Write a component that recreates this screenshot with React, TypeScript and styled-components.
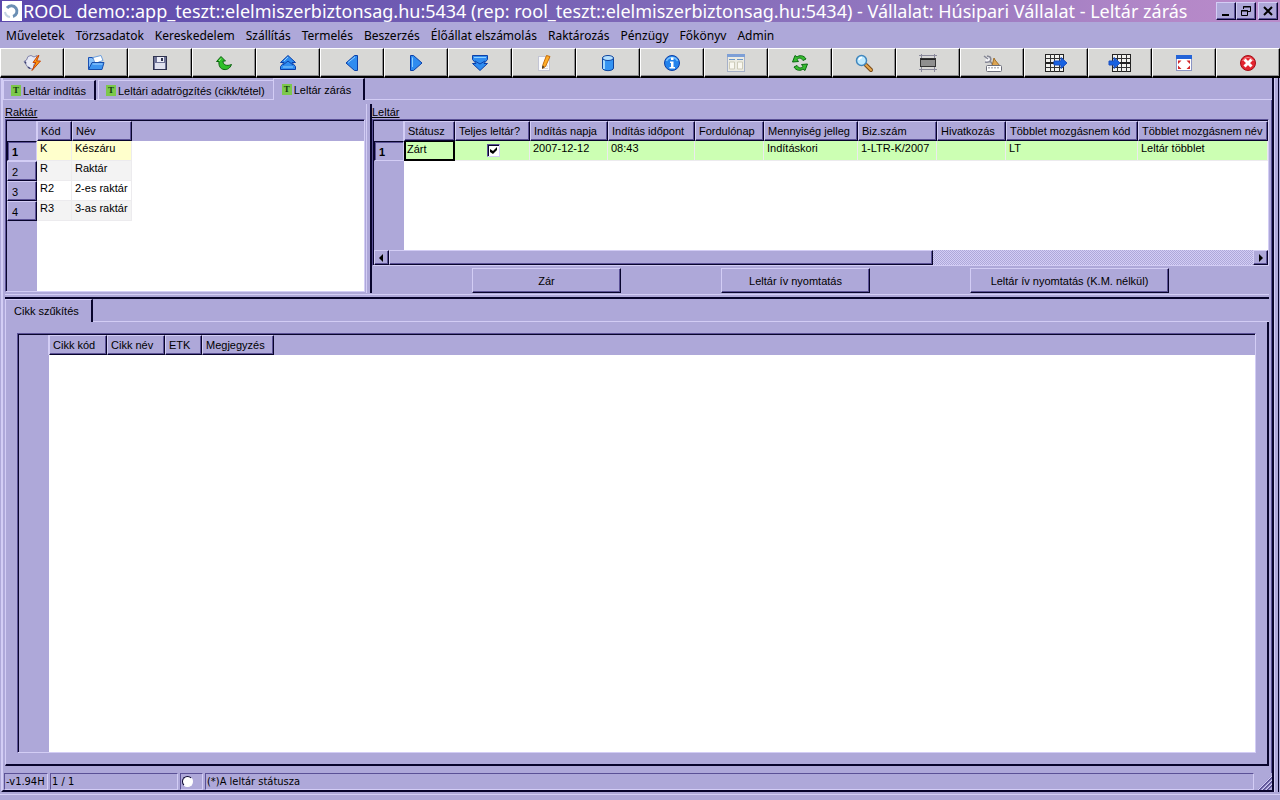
import React from "react";
import styled, { createGlobalStyle, css } from "styled-components";

const c = {
  base: "#aea8d9",
  light: "#d3cdf5",
  mid: "#5b5196",
  dark: "#08042c",
};
const ui = `"Liberation Sans", Arial, sans-serif`;
const wide = `"Noto Sans", sans-serif`;
const status = `"DejaVu Sans Condensed", "DejaVu Sans", sans-serif`;

const raised = css`
  border: 1px solid;
  border-color: ${c.light} ${c.dark} ${c.dark} ${c.light};
  box-shadow: inset -1px -1px 0 ${c.mid};
`;

const sunken = css`
  border: 1px solid;
  border-color: ${c.mid} ${c.light} ${c.light} ${c.mid};
  box-shadow: inset 1px 1px 0 ${c.dark};
  padding: 1px 0 0 1px;
`;

const Global = createGlobalStyle`
  *, *::before, *::after { box-sizing: border-box; }
  body { margin: 0; background: ${c.base}; color: #000; font: 11px/14px ${ui}; }
  button { font: inherit; color: inherit; background: none; border: 0; padding: 0; margin: 0; border-radius: 0; }
  h2 { margin: 0; font-size: 11px; font-weight: normal; }
`;

const Shell = styled.div`
  display: flex;
  flex-direction: column;
  min-height: 100vh;
  background: ${c.base};
`;

/* Title bar */
const TitleBar = styled.header`
  display: flex;
  align-items: center;
  height: 22px;
  padding: 0 2px;
  background: linear-gradient(90deg, #5c48ac 0%, #7460b4 40%, #9377bf 70%, #b488c8 92%, #b98bca 100%);
  color: #fff;
`;
const Logo = styled.svg`
  flex: none;
  width: 20px;
  height: 20px;
  background: #fff;
`;
const Title = styled.h1`
  flex: 1;
  min-width: 0;
  margin: 0;
  padding-left: 1px;
  overflow: hidden;
  white-space: nowrap;
  font: 18px/22px ${wide};
`;
const WindowButtons = styled.div`
  display: flex;
`;
const WindowButton = styled.button<{ $apart?: boolean }>`
  ${raised}
  display: grid;
  place-items: center;
  width: 20px;
  height: 18px;
  margin-left: ${(p) => (p.$apart ? 2 : 0)}px;
  background: ${c.base};
`;

/* Menu */
const Menu = styled.nav`
  display: flex;
  align-items: center;
  gap: 1px;
  height: 26px;
  padding: 2px 0 0 1px;
`;
const MenuItem = styled.button`
  padding: 0 5px;
  font: 12px/16px ${wide};
  white-space: nowrap;
`;

/* Toolbar */
const Toolbar = styled.div`
  display: grid;
  grid-template-columns: repeat(20, minmax(0, 1fr));
  height: 30px;
`;
const Tool = styled.button`
  display: grid;
  place-items: center;
  background: #d8d8d6;
  border: solid;
  border-width: 1px 1px 2px 1px;
  border-color: #fff #000 #000 #fff;
  box-shadow: inset -1px -1px 0 #8d8d90;
  svg { display: block; }
`;

/* Window frame */
const Frame = styled.main`
  flex: 1;
  display: flex;
  flex-direction: column;
  margin-right: 1px;
  padding-right: 4px;
  border-left: 1px solid ${c.base};
  border-right: 1px solid ${c.dark};
  box-shadow: inset -3px 0 0 ${c.base}, inset -4px 0 0 ${c.light};
`;
const Body = styled.div`
  flex: 1;
  display: flex;
  flex-direction: column;
  border: solid;
  border-width: 0 2px 2px 2px;
  border-color: ${c.dark} ${c.dark} ${c.dark} ${c.light};
`;
const TabStrip = styled.div<{ $short?: boolean }>`
  display: flex;
  align-items: flex-end;
  gap: 2px;
  height: ${(p) => (p.$short ? 22 : 23)}px;
  box-shadow: inset 0 -1px 0 ${c.light};
`;
const Tab = styled.button<{ $active?: boolean }>`
  display: flex;
  align-items: center;
  gap: 2px;
  height: ${(p) => (p.$active ? "100%" : "20px")};
  padding: ${(p) => (p.$active ? "0 12px 0 8px" : "0 8px 0 7px")};
  background: ${c.base};
  border: solid;
  border-width: 1px 2px 0 1px;
  border-color: ${c.light} ${c.dark} transparent ${c.light};
  box-shadow: ${(p) => (p.$active ? "none" : `inset 0 -1px 0 ${c.light}`)};
  white-space: nowrap;
  &[aria-selected="true"]:not(:first-child) {
    margin-left: -4px;
  }
`;
const Page = styled.section`
  flex: 1;
  display: flex;
  flex-direction: column;
  padding: 4px 2px 7px 2px;
  border-right: 1px solid ${c.mid};
`;

const Split = styled.div`
  display: flex;
  height: 189px;
`;
const Stores = styled.section`
  flex: 0 0 360px;
  display: flex;
  flex-direction: column;
`;
const Splitter = styled.div`
  width: 6px;
  margin-left: 1px;
  border: solid;
  border-width: 0 2px 0 1px;
  border-color: ${c.light} ${c.dark} ${c.light} ${c.light};
`;
const Inventory = styled.section`
  flex: 1;
  min-width: 0;
  display: flex;
  flex-direction: column;
`;
const Caption = styled.h2`
  height: 15px;
  line-height: 17px;
  text-decoration: underline;
`;
const Grid = styled.div<{ $height?: number }>`
  ${sunken}
  flex: ${(p) => (p.$height ? `0 0 ${p.$height}px` : "1")};
  display: flex;
  flex-direction: column;
  overflow: hidden;
`;
const Sheet = styled.div`
  flex: 1;
  overflow: hidden;
  background: linear-gradient(${c.base}, ${c.base}) 0 0 / 100% 20px no-repeat,
    linear-gradient(90deg, ${c.base} 30px, #fff 30px);
`;
const Table = styled.table<{ $fill?: boolean }>`
  width: ${(p) => (p.$fill ? "100%" : "1px")};
  table-layout: fixed;
  border-collapse: separate;
  border-spacing: 0;
  white-space: nowrap;
`;
const HeadCell = styled.th`
  ${raised}
  height: 20px;
  padding: 0 0 0 3px;
  text-align: left;
  font-weight: normal;
  overflow: hidden;
`;
const Corner = styled.td`
  height: 20px;
  padding: 0;
  border-right: 1px solid ${c.light};
`;
const RowHead = styled.th<{ $current?: boolean }>`
  ${raised}
  height: 20px;
  padding: 2px 0 0 4px;
  text-align: left;
  font-weight: normal;
  ${(p) =>
    p.$current &&
    css`
      font-weight: bold;
      border-color: ${c.dark} ${c.light} ${c.light} ${c.dark};
      box-shadow: inset 1px 1px 0 ${c.mid};
    `}
`;
const Cell = styled.td<{ $bg: string; $focus?: boolean }>`
  height: 20px;
  padding: 0 0 0 3px;
  vertical-align: top;
  overflow: hidden;
  background: ${(p) => p.$bg};
  border-right: 1px solid #ecebee;
  border-bottom: 1px solid #ecebee;
  ${(p) =>
    p.$focus &&
    css`
      padding: 0 0 0 1px;
      border: 2px solid #000;
      border-top-width: 1px;
    `}
`;
const Check = styled.input`
  appearance: none;
  display: block;
  position: relative;
  width: 13px;
  height: 13px;
  margin: 3px auto 0;
  background: #fff;
  border: 1px solid;
  border-color: ${c.mid} ${c.light} ${c.light} ${c.mid};
  box-shadow: inset 1px 1px 0 ${c.dark};
  &:checked::after {
    content: "";
    position: absolute;
    left: 2px;
    top: 2px;
    width: 7px;
    height: 7px;
    background: #000;
    clip-path: polygon(0 2px, 3px 4px, 7px 0, 7px 3px, 3px 7px, 0 5px);
  }
`;

const ScrollBar = styled.div`
  display: flex;
  height: 15px;
  background: repeating-conic-gradient(${c.light} 0 25%, ${c.base} 0 50%) 0 0 / 2px 2px;
`;
const ScrollArrow = styled.button`
  ${raised}
  display: grid;
  place-items: center;
  width: 15px;
  background: ${c.base};
`;
const ScrollTrack = styled.div`
  flex: 1;
`;
const Thumb = styled.div`
  ${raised}
  width: 63%;
  height: 15px;
  background: ${c.base};
`;
const Actions = styled.div`
  display: flex;
  justify-content: space-evenly;
  padding-top: 2px;
`;
const Action = styled.button<{ $wide?: boolean }>`
  ${raised}
  width: ${(p) => (p.$wide ? 199 : 149)}px;
  height: 25px;
`;
const Divider = styled.div`
  height: 5px;
  margin-top: 1px;
  border-top: 1px solid ${c.light};
  border-bottom: 2px solid ${c.dark};
`;
const Details = styled.section`
  flex: 1;
  display: flex;
  flex-direction: column;
`;
const DetailsPage = styled.div`
  flex: 1;
  display: flex;
  padding: 11px;
  border: solid;
  border-width: 0 2px 2px 1px;
  border-color: ${c.light} ${c.dark} ${c.dark} ${c.light};
`;

/* Status bar */
const StatusBar = styled.footer`
  display: flex;
  gap: 2px;
  height: 17px;
  padding-left: 1px;
  font: 11px/15px ${status};
`;
const Status = styled.div<{ $w?: number }>`
  flex: ${(p) => (p.$w ? `0 0 ${p.$w}px` : "1")};
  display: flex;
  align-items: center;
  padding-left: 1px;
  border: 1px solid;
  border-color: ${c.mid} ${c.light} ${c.light} ${c.mid};
  white-space: nowrap;
`;
const Lamp = styled.input`
  appearance: none;
  width: 11px;
  height: 11px;
  margin: 0;
  border-radius: 50%;
  background: #fff;
  border: 1px solid;
  border-color: ${c.dark} #fff #fff ${c.dark};
`;
const Grip = styled.svg`
  align-self: flex-end;
  width: 14px;
  height: 14px;
  margin-left: 2px;
`;
const Base = styled.div`
  height: 8px;
  border-bottom: 5px solid ${c.base};
  box-shadow: inset 0 -1px 0 ${c.light};
`;

/* Icons */
const Svg = ({ children }: { children: React.ReactNode }) => (
  <svg width="20" height="20" viewBox="0 0 20 20" aria-hidden="true">
    {children}
  </svg>
);
const blue = { fill: "#2f8cf0", stroke: "#0b3fa8", strokeWidth: 1 };

const TableGrid = ({ x }: { x: number }) => (
  <g>
    <rect x={x} y="1.5" width="18" height="17" fill="#f2f2ee" stroke="#222" />
    <path d={`M${x} 5.5h18M${x} 9.5h18M${x} 14.5h18M${x + 5} 1v18M${x + 9} 1v18M${x + 14} 1v18`} stroke="#333" fill="none" />
    <path d={`M${x} 10h18`} stroke="#222" strokeWidth="2" />
  </g>
);

const tools: { label: string; icon: React.ReactNode }[] = [
  {
    label: "Kapcsolat",
    icon: (
      <Svg>
        <path d="M6 3.500l3-1 3 1.500 3-1.500v5l-3 4-1 5-5-2-4-6 2.500-1.500z" fill="#e8eaf5" stroke="#8083ab" />
        <path d="M3 8.500l1 2M6 14l2 1.500" stroke="#3d4070" strokeWidth="1.500" />
        <path d="M16 2.500l-5 7h3l-4 8 8.500-9.500h-4l2.500-5.500z" fill="#ff9d13" stroke="#c9460a" />
      </Svg>
    ),
  },
  {
    label: "Megnyitás",
    icon: (
      <Svg>
        <path d="M2.500 16V4.500h4l1 2h6V9" fill="#86bdf6" stroke="#1a50b4" />
        <path d="M7 4.500l8-2 2 5-8 3z" fill="#fff" stroke="#6b9edc" />
        <path d="M2.500 16.500L6 9.500h12l-2 7z" fill="#3d94f0" stroke="#164fae" />
        <path d="M6.500 11h10" stroke="#a8d5ff" />
      </Svg>
    ),
  },
  {
    label: "Mentés",
    icon: (
      <Svg>
        <rect x="3.500" y="3.500" width="13" height="13" fill="#6e7396" stroke="#2f3350" />
        <rect x="7" y="4" width="7" height="5" fill="#eceef8" />
        <rect x="11" y="5" width="2" height="3" fill="#2f3350" />
        <rect x="5" y="10" width="10" height="6" fill="#dfe1ee" />
      </Svg>
    ),
  },
  {
    label: "Visszavonás",
    icon: (
      <Svg>
        <path d="M2.500 8.500l4.500-5 4.500 4.500H9c0 4 3.500 5.500 8.500 3.500-1.500 4-4.500 5.500-7.500 5-4-.5-5.500-4-5-8z" fill="#2fc02a" stroke="#0c6410" />
        <path d="M7 5.500L5 8" stroke="#a5f08e" />
      </Svg>
    ),
  },
  {
    label: "Első",
    icon: (
      <Svg>
        <path d="M10 2.500L17.500 9.500h-3.500l3.500 4v3h-15v-3l3.500-4H2.500z" {...blue} />
        <path d="M5 12l5-4 5 4" fill="none" stroke="#0b3fa8" />
        <path d="M10 4L6 8M5 14h10" stroke="#8fd0ff" />
      </Svg>
    ),
  },
  {
    label: "Előző",
    icon: (
      <Svg>
        <path d="M15.500 2.500v15h-3L4 10l8.500-7.500z" {...blue} />
        <path d="M13 4L6 9.500" stroke="#8fd0ff" />
      </Svg>
    ),
  },
  {
    label: "Következő",
    icon: (
      <Svg>
        <path d="M4.500 2.500v15h3L16 10 7.500 2.500z" {...blue} />
        <path d="M6.500 4.500V14" stroke="#8fd0ff" />
      </Svg>
    ),
  },
  {
    label: "Utolsó",
    icon: (
      <Svg>
        <path d="M10 17.500L2.500 10.500h3.500L2.500 6.500v-4h15v4l-3.500 4h3.500z" {...blue} />
        <path d="M4 4.500h12" fill="none" stroke="#8fd0ff" />
        <path d="M5 8l5 3 5-3" fill="none" stroke="#0b3fa8" />
      </Svg>
    ),
  },
  {
    label: "Szerkesztés",
    icon: (
      <Svg>
        <rect x="4.500" y="3.500" width="11" height="14" fill="#fbfbfd" stroke="#c3c5d4" />
        <path d="M8 13h6M8 15.500h6" stroke="#d2d3de" />
        <path d="M12.500 2.500l3.500 1-4.500 10-3 2 .5-4z" fill="#ffae2a" stroke="#c46c0a" />
        <path d="M8.500 12.500l-.5 3 2.500-1.500z" fill="#333" />
      </Svg>
    ),
  },
  {
    label: "Adatbázis",
    icon: (
      <Svg>
        <path d="M4.500 5v10c0 3.500 11 3.500 11 0V5z" fill="#3594f2" stroke="#0e459f" />
        <path d="M6 7v9" stroke="#a6dbff" strokeWidth="2" />
        <ellipse cx="10" cy="5" rx="5.500" ry="2.500" fill="#b5e0ff" stroke="#0e459f" />
      </Svg>
    ),
  },
  {
    label: "Információ",
    icon: (
      <Svg>
        <circle cx="10" cy="10" r="7.500" fill="#2383ec" stroke="#0b3fa8" />
        <path d="M4.500 8a6 6 0 0 1 11 0" fill="none" stroke="#79c3ff" strokeWidth="1.500" />
        <rect x="9" y="4.500" width="2.500" height="2.500" fill="#fff" />
        <path d="M8 8.500h3.500V14H13v1.500H7.500V14H9v-4H8z" fill="#fff" />
      </Svg>
    ),
  },
  {
    label: "Űrlap",
    icon: (
      <Svg>
        <rect x="1.500" y="1.500" width="17" height="17" fill="#ecebe2" stroke="#a5b0c8" />
        <rect x="1" y="1" width="18" height="3" fill="#7d9fd6" />
        <path d="M3 6.500h6M11 6.500h6" stroke="#6a97c8" />
        <path d="M3.500 9h5v7h-5zM11.500 9h5v7h-5z" fill="#f9f8f1" stroke="#cdcbb9" />
      </Svg>
    ),
  },
  {
    label: "Frissítés",
    icon: (
      <Svg>
        <path d="M16 6c-2-4-7-4-9-2L5 2.500 2.500 9l6-.5-1.500-2c2-2 4-2 6 1z" fill="#38bd30" stroke="#0a6a12" />
        <path d="M4 14c2 4 7 4 9 2l2 1.500 2.500-6.500-6 .5 1.500 2c-2 2-4 2-6-1z" fill="#38bd30" stroke="#0a6a12" />
      </Svg>
    ),
  },
  {
    label: "Keresés",
    icon: (
      <Svg>
        <path d="M12 12l5 5" stroke="#7a4a16" strokeWidth="4" strokeLinecap="round" />
        <path d="M12 12l5 5" stroke="#e6a64c" strokeWidth="2" strokeLinecap="round" />
        <circle cx="7.500" cy="7.500" r="5" fill="#bfeaff" stroke="#3f86bd" strokeWidth="1.500" />
        <path d="M5 7a3 3 0 0 1 3-2.500" stroke="#fff" strokeWidth="1.500" fill="none" />
      </Svg>
    ),
  },
  {
    label: "Sor",
    icon: (
      <Svg>
        <path d="M3.500 1v18M16.500 1v18M1 2.500h18M1 16.500h18" stroke="#8b8a9c" />
        <rect x="2.500" y="5.500" width="15" height="8" fill="#8f8f8f" stroke="#333" />
        <path d="M3 6.500h14" stroke="#222" />
      </Svg>
    ),
  },
  {
    label: "Eszközök",
    icon: (
      <Svg>
        <path d="M2 3l4 3M3 9c5 1 7-2 5-5l-3-1M8 8l3 4" stroke="#858795" strokeWidth="1.500" fill="#f5f5f8" />
        <path d="M12 5l1 2 5 6h-8z" fill="#dda552" stroke="#a06f28" />
        <rect x="4.500" y="12.500" width="15" height="6" rx="1" fill="#fff" stroke="#6d6f7c" />
        <path d="M7 14v1.500M10 14v1.500M13 14v1.500M16 14v1.500" stroke="#6d6f7c" />
      </Svg>
    ),
  },
  {
    label: "Exportálás",
    icon: (
      <svg width="24" height="20" viewBox="0 0 24 20" aria-hidden="true">
        <TableGrid x={1.5} />
        <path d="M10 8h7V4.500l6 5.500-6 5.500V12h-7z" fill="#1762e2" stroke="#1b4fc0" />
      </svg>
    ),
  },
  {
    label: "Importálás",
    icon: (
      <svg width="24" height="20" viewBox="0 0 24 20" aria-hidden="true">
        <TableGrid x={4.5} />
        <path d="M1 8h5V4.500l6 5.500-6 5.500V12H1z" fill="#1762e2" stroke="#1b4fc0" />
      </svg>
    ),
  },
  {
    label: "Teljes képernyő",
    icon: (
      <Svg>
        <rect x="2.500" y="2.500" width="15" height="15" fill="#fff" stroke="#8a94c4" />
        <rect x="2" y="2" width="16" height="4" fill="#2464d8" />
        <path d="M4 7.500h3.500L4 11zM16 7.500h-3.500L16 11zM4 16v-3.500L7.500 16zM16 16v-3.500L12.500 16z" fill="#d2262a" />
      </Svg>
    ),
  },
  {
    label: "Kilépés",
    icon: (
      <Svg>
        <circle cx="10" cy="10" r="7.500" fill="#e32630" stroke="#a50f18" />
        <path d="M4.500 8a6 6 0 0 1 11 0" fill="none" stroke="#f8828a" />
        <path d="M6.500 6.500l7 7M13.500 6.500l-7 7" stroke="#fff" strokeWidth="3" />
      </Svg>
    ),
  },
];

const TabMark = styled.span`
  display: grid;
  place-items: center;
  width: 10px;
  height: 11px;
  background: #7cc84c;
  color: #123c10;
  font: bold 9px/11px "Liberation Serif", serif;
`;

const menu = [
  "Műveletek", "Törzsadatok", "Kereskedelem", "Szállítás", "Termelés", "Beszerzés",
  "Élőállat elszámolás", "Raktározás", "Pénzügy", "Főkönyv", "Admin",
];
const tabs = ["Leltár indítás", "Leltári adatrögzítés (cikk/tétel)", "Leltár zárás"];
const stores = [
  ["K", "Készáru"],
  ["R", "Raktár"],
  ["R2", "2-es raktár"],
  ["R3", "3-as raktár"],
];
const storeBg = ["#ffffcc", "#f3f3f3", "#ffffff", "#f3f3f3"];
const inventoryCols: [string, number | undefined, string][] = [
  ["Státusz", 51, "Zárt"],
  ["Teljes leltár?", 75, ""],
  ["Indítás napja", 78, "2007-12-12"],
  ["Indítás időpont", 87, "08:43"],
  ["Fordulónap", 69, ""],
  ["Mennyiség jelleg", 94, "Indításkori"],
  ["Biz.szám", 79, "1-LTR-K/2007"],
  ["Hivatkozás", 69, ""],
  ["Többlet mozgásnem kód", 132, "LT"],
  ["Többlet mozgásnem név", undefined, "Leltár többlet"],
];
const itemCols: [string, number][] = [["Cikk kód", 58], ["Cikk név", 58], ["ETK", 37], ["Megjegyzés", 72]];

export default function App() {
  return (
    <Shell>
      <Global />
      <TitleBar>
        <Logo viewBox="0 0 20 20" aria-hidden="true">
          <path d="M5 7a5.500 5.500 0 1 1 6 8.500" fill="none" stroke="#6b8fb4" strokeWidth="3" />
          <path d="M3 11a6 6 0 0 0 5 5" fill="none" stroke="#c3d3e2" strokeWidth="2" />
        </Logo>
        <Title>
          ROOL demo::app_teszt::elelmiszerbiztonsag.hu:5434 (rep: rool_teszt::elelmiszerbiztonsag.hu:5434) - Vállalat: Húsipari Vállalat - Leltár zárás
        </Title>
        <WindowButtons>
          <WindowButton aria-label="Kis méret">
            <svg width="12" height="12" viewBox="0 0 12 12"><path d="M2 10h7" stroke="#000" strokeWidth="2" /></svg>
          </WindowButton>
          <WindowButton aria-label="Előző méret">
            <svg width="12" height="12" viewBox="0 0 12 12">
              <path d="M3.500 4V1.500h7v5H8M3 2h8" fill="none" stroke="#000" />
              <path d="M1.500 5.500h6v5h-6zM1 6h7" fill="none" stroke="#000" />
            </svg>
          </WindowButton>
          <WindowButton $apart aria-label="Bezárás">
            <svg width="12" height="12" viewBox="0 0 12 12"><path d="M2 2l8 8M10 2l-8 8" stroke="#000" strokeWidth="2" /></svg>
          </WindowButton>
        </WindowButtons>
      </TitleBar>

      <Menu>{menu.map((m) => <MenuItem key={m}>{m}</MenuItem>)}</Menu>

      <Toolbar role="toolbar">
        {tools.map((t) => <Tool key={t.label} aria-label={t.label}>{t.icon}</Tool>)}
      </Toolbar>

      <Frame>
        <Body>
          <TabStrip $short role="tablist">
            {tabs.map((t, i) => (
              <Tab key={t} role="tab" aria-selected={i === 2} $active={i === 2}>
                <TabMark aria-hidden="true">T</TabMark>
                {t}
              </Tab>
            ))}
          </TabStrip>

          <Page>
            <Split>
              <Stores>
                <Caption>Raktár</Caption>
                <Grid $height={173}>
                  <Sheet>
                    <Table>
                      <colgroup>
                        <col style={{ width: 30 }} />
                        <col style={{ width: 35 }} />
                        <col style={{ width: 60 }} />
                      </colgroup>
                      <thead>
                        <tr><Corner /><HeadCell>Kód</HeadCell><HeadCell>Név</HeadCell></tr>
                      </thead>
                      <tbody>
                        {stores.map(([code, name], i) => (
                          <tr key={code}>
                            <RowHead $current={i === 0}>{i + 1}</RowHead>
                            <Cell $bg={storeBg[i]}>{code}</Cell>
                            <Cell $bg={storeBg[i]}>{name}</Cell>
                          </tr>
                        ))}
                      </tbody>
                    </Table>
                  </Sheet>
                </Grid>
              </Stores>
              <Splitter />
              <Inventory>
                <Caption>Leltár</Caption>
                <Grid $height={147}>
                  <Sheet>
                    <Table $fill>
                      <colgroup>
                        <col style={{ width: 30 }} />
                        {inventoryCols.map(([n, w]) => <col key={n} style={{ width: w }} />)}
                      </colgroup>
                      <thead>
                        <tr><Corner />{inventoryCols.map(([n]) => <HeadCell key={n}>{n}</HeadCell>)}</tr>
                      </thead>
                      <tbody>
                        <tr>
                          <RowHead $current>1</RowHead>
                          {inventoryCols.map(([n, , v], i) => (
                            <Cell key={n} $bg="#ccffb3" $focus={i === 0}>
                              {i === 1 ? <Check type="checkbox" defaultChecked aria-label={n} /> : v}
                            </Cell>
                          ))}
                        </tr>
                      </tbody>
                    </Table>
                  </Sheet>
                  <ScrollBar>
                    <ScrollArrow aria-label="Balra">
                      <svg width="5" height="8" viewBox="0 0 5 8"><path d="M4 0v8L0 4z" /></svg>
                    </ScrollArrow>
                    <ScrollTrack><Thumb /></ScrollTrack>
                    <ScrollArrow aria-label="Jobbra">
                      <svg width="5" height="8" viewBox="0 0 5 8"><path d="M1 0v8l4-4z" /></svg>
                    </ScrollArrow>
                  </ScrollBar>
                </Grid>
                <Actions>
                  <Action>Zár</Action>
                  <Action>Leltár ív nyomtatás</Action>
                  <Action $wide>Leltár ív nyomtatás (K.M. nélkül)</Action>
                </Actions>
              </Inventory>
            </Split>
            <Divider />
            <Details>
              <TabStrip role="tablist">
                <Tab $active role="tab" aria-selected>Cikk szűkítés</Tab>
              </TabStrip>
              <DetailsPage>
                <Grid>
                  <Sheet>
                    <Table>
                      <colgroup>
                        <col style={{ width: 30 }} />
                        {itemCols.map(([n, w]) => <col key={n} style={{ width: w }} />)}
                      </colgroup>
                      <thead>
                        <tr><Corner />{itemCols.map(([n]) => <HeadCell key={n}>{n}</HeadCell>)}</tr>
                      </thead>
                    </Table>
                  </Sheet>
                </Grid>
              </DetailsPage>
            </Details>
          </Page>

          <StatusBar>
            <Status $w={44}>-v1.94H</Status>
            <Status $w={128}>1 / 1</Status>
            <Status $w={23}><Lamp type="radio" aria-label="Állapot" /></Status>
            <Status>(*)A leltár státusza</Status>
            <Grip viewBox="0 0 14 14" aria-hidden="true">
              <path d="M1 14L14 1M5 14l9-9M9 14l5-5" stroke={c.mid} strokeWidth="2" />
              <path d="M0 14L14 0M4 14L14 4M8 14l6-6" stroke={c.light} />
            </Grip>
          </StatusBar>
        </Body>
      </Frame>
      <Base />
    </Shell>
  );
}
